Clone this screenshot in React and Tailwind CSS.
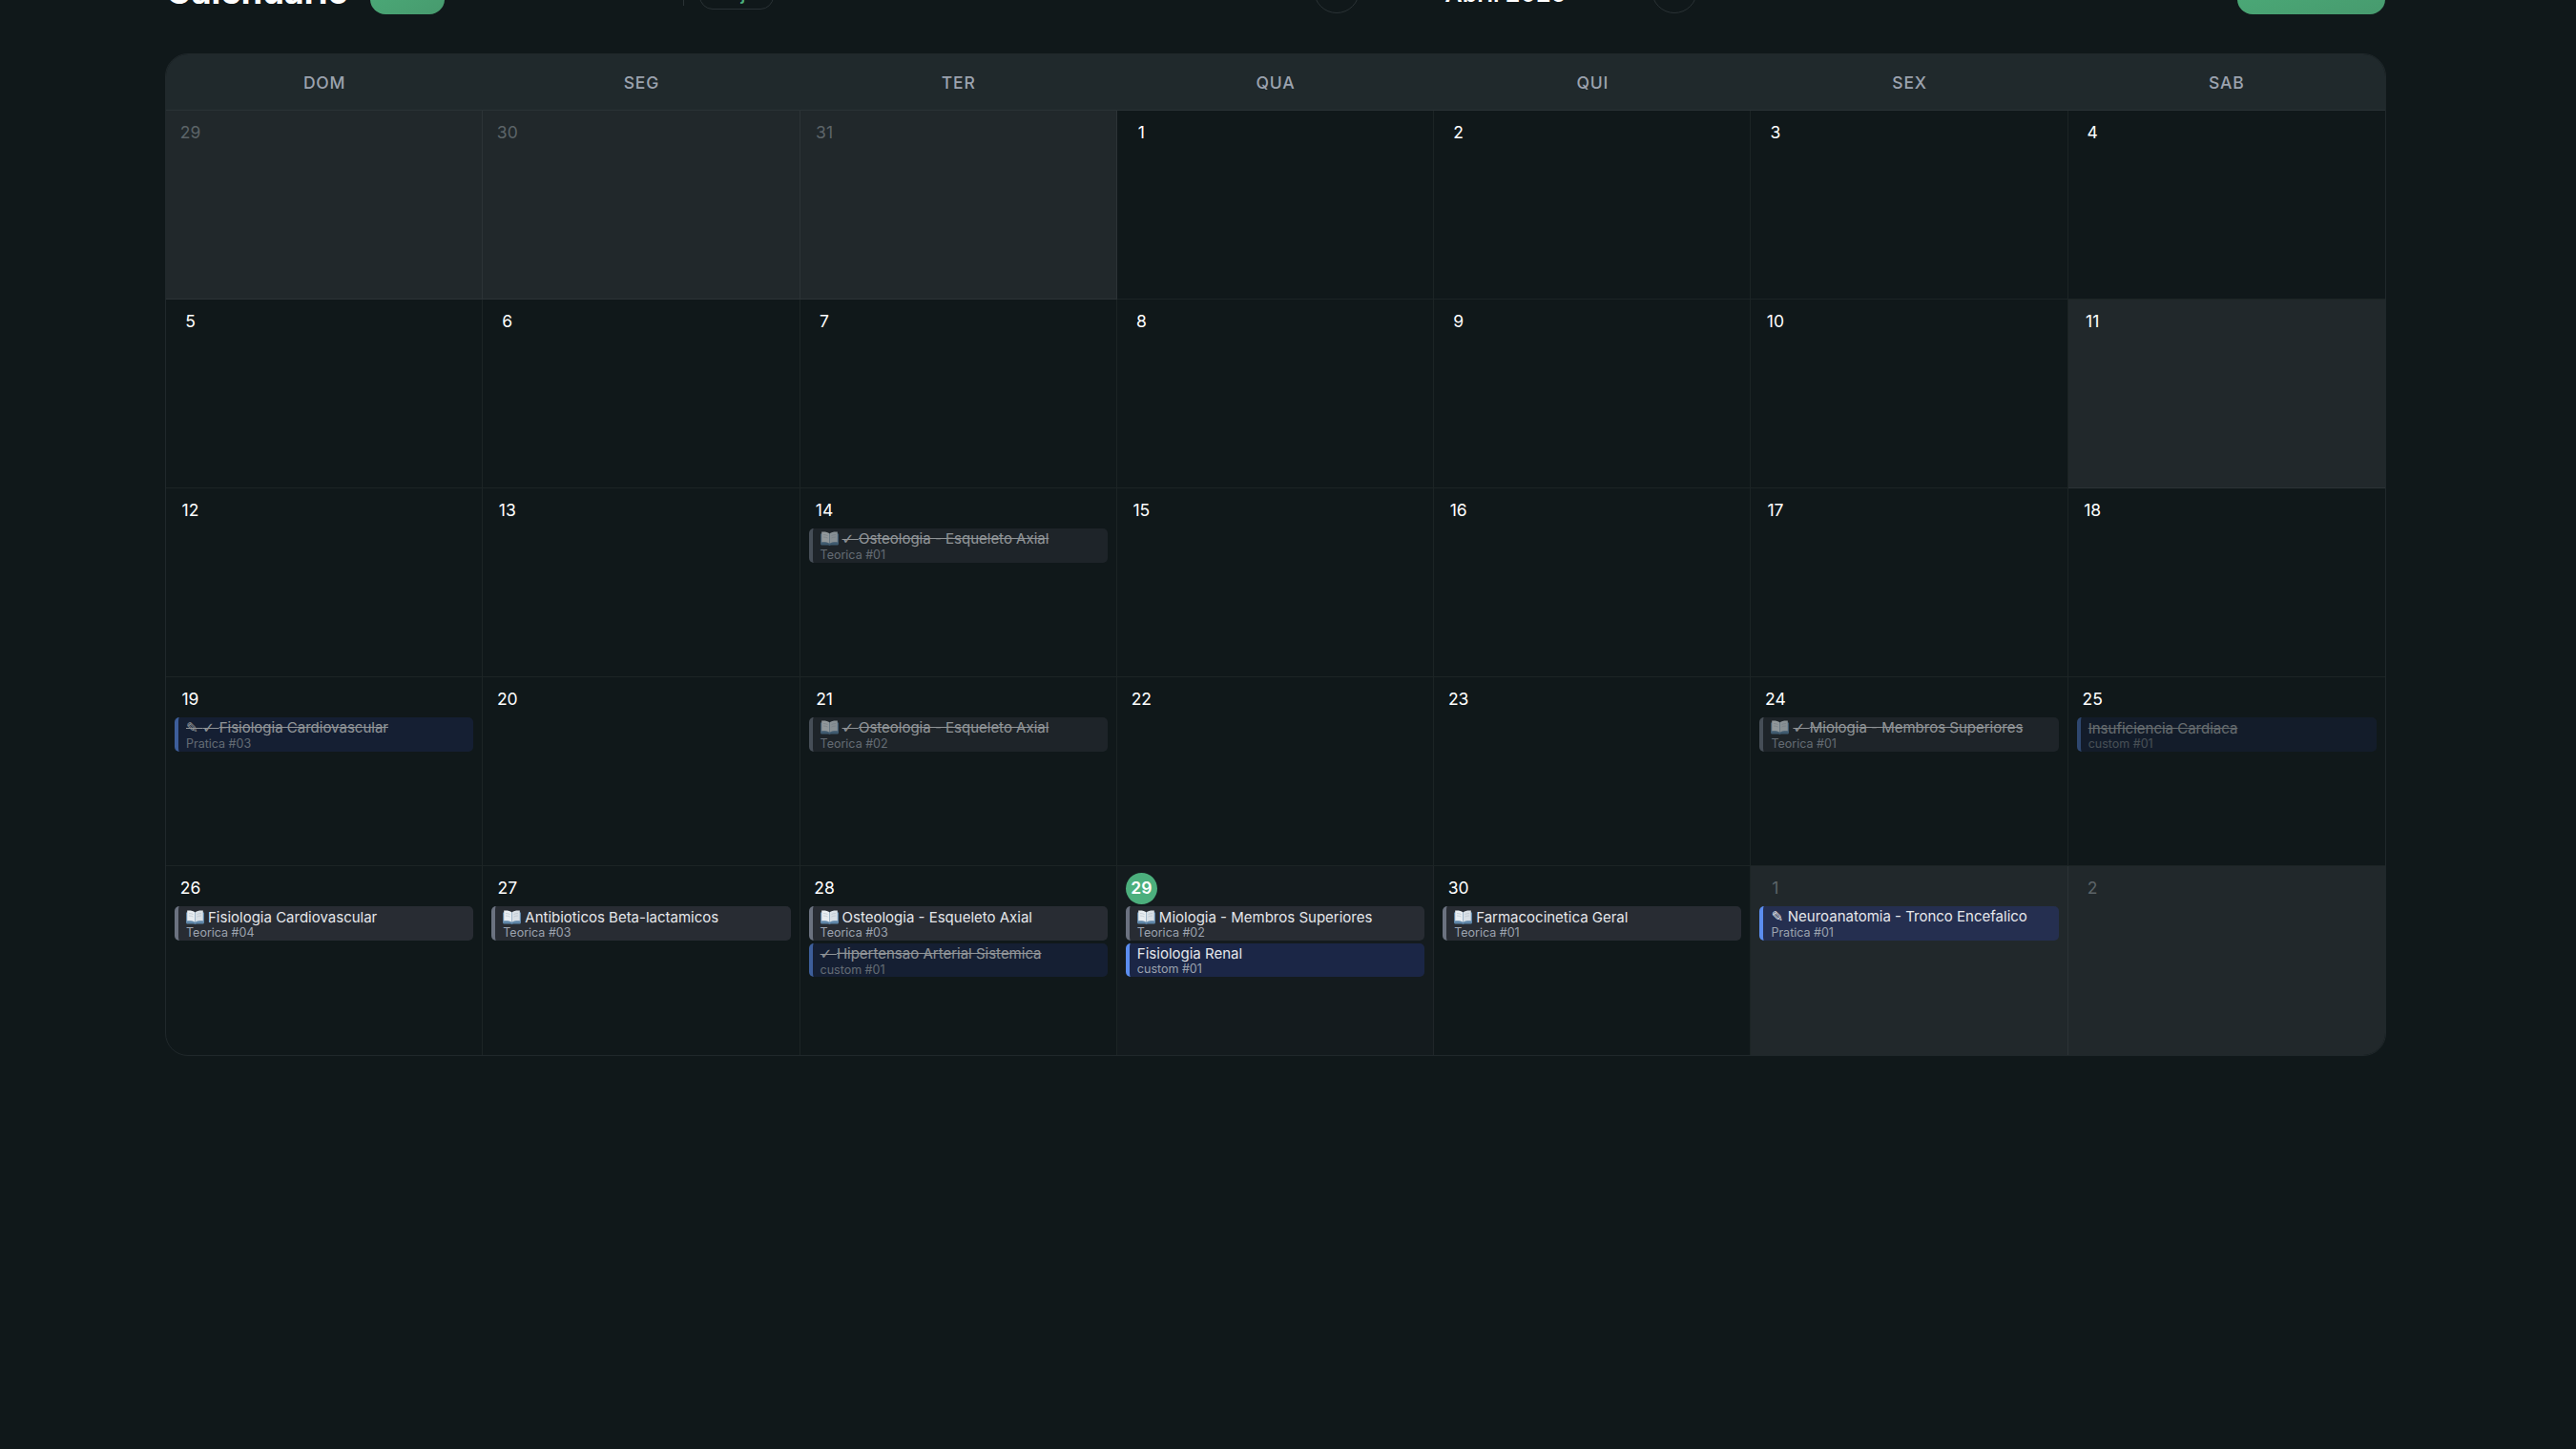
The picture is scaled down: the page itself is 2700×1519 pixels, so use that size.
const DAYS = ["DOM", "SEG", "TER", "QUA", "QUI", "SEX", "SAB"];

const WEEKS = [
  [
    { n: 29, other: true },
    { n: 30, other: true },
    { n: 31, other: true },
    { n: 1 },
    { n: 2 },
    { n: 3 },
    { n: 4 },
  ],
  [
    { n: 5 },
    { n: 6 },
    { n: 7 },
    { n: 8 },
    { n: 9 },
    { n: 10 },
    { n: 11, shaded: true },
  ],
  [
    { n: 12 },
    { n: 13 },
    {
      n: 14,
      events: [{ icon: "book", check: true, title: "Osteologia - Esqueleto Axial", sub: "Teorica #01", kind: "gray", done: true }],
    },
    { n: 15 },
    { n: 16 },
    { n: 17 },
    { n: 18 },
  ],
  [
    {
      n: 19,
      events: [{ icon: "pencil", check: true, title: "Fisiologia Cardiovascular", sub: "Pratica #03", kind: "blue", done: true }],
    },
    { n: 20 },
    {
      n: 21,
      events: [{ icon: "book", check: true, title: "Osteologia - Esqueleto Axial", sub: "Teorica #02", kind: "gray", done: true }],
    },
    { n: 22 },
    { n: 23 },
    {
      n: 24,
      events: [{ icon: "book", check: true, title: "Miologia - Membros Superiores", sub: "Teorica #01", kind: "gray", done: true }],
    },
    {
      n: 25,
      events: [{ title: "Insuficiencia Cardiaca", sub: "custom #01", kind: "blue", done: true, faint: true }],
    },
  ],
  [
    { n: 26, events: [{ icon: "book", title: "Fisiologia Cardiovascular", sub: "Teorica #04", kind: "gray" }] },
    { n: 27, events: [{ icon: "book", title: "Antibioticos Beta-lactamicos", sub: "Teorica #03", kind: "gray" }] },
    {
      n: 28,
      events: [
        { icon: "book", title: "Osteologia - Esqueleto Axial", sub: "Teorica #03", kind: "gray" },
        { check: true, title: "Hipertensao Arterial Sistemica", sub: "custom #01", kind: "blue", done: true },
      ],
    },
    {
      n: 29,
      today: true,
      events: [
        { icon: "book", title: "Miologia - Membros Superiores", sub: "Teorica #02", kind: "gray" },
        { title: "Fisiologia Renal", sub: "custom #01", kind: "blue" },
      ],
    },
    { n: 30, events: [{ icon: "book", title: "Farmacocinetica Geral", sub: "Teorica #01", kind: "gray" }] },
    {
      n: 1,
      other: true,
      events: [{ icon: "pencil", title: "Neuroanatomia - Tronco Encefalico", sub: "Pratica #01", kind: "blue" }],
    },
    { n: 2, other: true },
  ],
];

function BookIcon() {
  return (
    <svg viewBox="0 0 19 15" className="inline-block w-[19px] h-[15px] mr-[4px] align-[-2px]">
      <path d="M0 2.5h19V13c0 .8-.6 1.5-1.4 1.5H11c-.6 0-1 .5-1.5.5S8.600 14.500 8 14.500H1.400C.6 14.500 0 13.800 0 13z" fill="#5f86a8" />
      <path d="M1.200.6C4.400.3 7.600.8 9.300 2.300v10.400C7.400 11.500 4.400 11.100 1.200 11.400z" fill="#e8edf1" />
      <path d="M17.800.6c-3.200-.3-6.400.2-8.100 1.700v10.400c1.900-1.200 4.900-1.600 8.100-1.300z" fill="#d9e0e6" />
      <path d="M3 3.500c1.600 0 3 .3 4.500 1M3 6c1.600 0 3 .3 4.500 1M16 3.500c-1.600 0-3 .3-4.500 1M16 6c-1.600 0-3 .3-4.500 1" stroke="#b4bec7" strokeWidth=".6" fill="none" />
    </svg>
  );
}

function EventCard({ e }) {
  const tone =
    e.kind === "gray"
      ? "bg-[#282c33] border-l-[#6b7280]"
      : "bg-[rgba(47,67,167,0.3)] border-l-[#5b8def]";
  const fade = e.faint ? "opacity-40" : e.done ? "opacity-60" : "";
  return (
    <div className={`h-[35.5px] rounded-[5px] border-l-[4px] pl-[8px] pr-2 flex flex-col justify-center overflow-hidden ${tone} ${fade}`}>
      <div className={`text-[15px] leading-[19px] font-normal whitespace-nowrap text-[#e5e7eb] ${e.done ? "line-through" : ""}`}>
        {e.icon === "book" && <BookIcon />}
        {e.icon === "pencil" && <span className="font-['DejaVu_Sans',sans-serif]">✎ </span>}
        {e.check && <span className="font-['DejaVu_Sans',sans-serif]">✓ </span>}
        {e.title}
      </div>
      <div className="text-[12.5px] leading-[13px] text-[#9ca3af] whitespace-nowrap">{e.sub}</div>
    </div>
  );
}

function DayCell({ d, last, lastRow }) {
  const bg = d.other || d.shaded ? "bg-[#21282b]" : d.today ? "bg-[#141b1e]" : "";
  return (
    <div className={`px-[9px] pt-[7px] min-w-0 ${bg} ${last ? "" : "border-r border-r-white/[0.05]"} ${lastRow ? "" : "border-b border-b-white/[0.05]"}`}>
      <div
        className={`w-[33px] h-[33px] rounded-full flex items-center justify-center text-[17.5px] mb-[2px] ${
          d.today ? "bg-[#4caf7d] text-white font-semibold" : d.other ? "text-[#5c6468]" : "text-white"
        }`}
      >
        {d.n}
      </div>
      <div className="flex flex-col gap-[3px]">
        {(d.events || []).map((e, i) => (
          <EventCard key={i} e={e} />
        ))}
      </div>
    </div>
  );
}

export default function App() {
  return (
    <div className="h-[1519px] overflow-hidden bg-[#10181a] font-['Inter','Liberation_Sans',sans-serif] text-white">
      <div className="pl-[173px] w-[2501px] -mt-[50px]">
        <header className="h-[65px] flex items-end pr-px">
          <div className="flex items-start h-[50px]">
            <h1 className="text-[36px] leading-[50px] font-bold w-[189px] ml-px mt-[1px]">Calendario</h1>
            <button className="ml-[25px] w-[78px] h-[50px] rounded-[16px] bg-gradient-to-br from-[#4cae7a] to-[#479a6e]" />
            <div className="ml-[250px] w-px h-[41px] bg-[#2a3235]" />
            <button className="ml-[16px] w-[78px] h-[45px] rounded-[14px] border border-[#2a3235] pt-[12px] text-[18px] leading-[24px] font-semibold text-[#4caf7d]">
              <span className="block">Hoje</span>
            </button>
          </div>
          <div className="ml-[566px] flex items-start h-[50px]">
            <button className="w-[48px] h-[49px] rounded-full border border-[#2a3235]" />
            <div className="w-[306px] text-center text-[25px] leading-[34px] font-semibold mt-[11px]">Abril 2026</div>
            <button className="w-[48px] h-[49px] rounded-full border border-[#2a3235]" />
          </div>
          <button className="ml-auto w-[155px] h-[50px] rounded-[16px] bg-gradient-to-br from-[#4cae7a] to-[#479a6e]" />
        </header>

        <section className="mt-[41px] w-[2328px] rounded-[24px] overflow-hidden border border-[#20282b]">
          <div className="grid grid-cols-7 h-[59px] pt-[2px] bg-[#20292c] border-b border-[#2a3235]">
            {DAYS.map((d) => (
              <div key={d} className="flex items-center justify-center text-[17.500px] font-medium tracking-[0.8px] text-[#9ca3af]">
                {d}
              </div>
            ))}
          </div>
          {WEEKS.map((w, i) => (
            <div key={i} className="grid grid-cols-7 h-[198px]">
              {w.map((d, j) => (
                <DayCell key={j} d={d} last={j === 6} lastRow={i === WEEKS.length - 1} />
              ))}
            </div>
          ))}
        </section>
      </div>
    </div>
  );
}
